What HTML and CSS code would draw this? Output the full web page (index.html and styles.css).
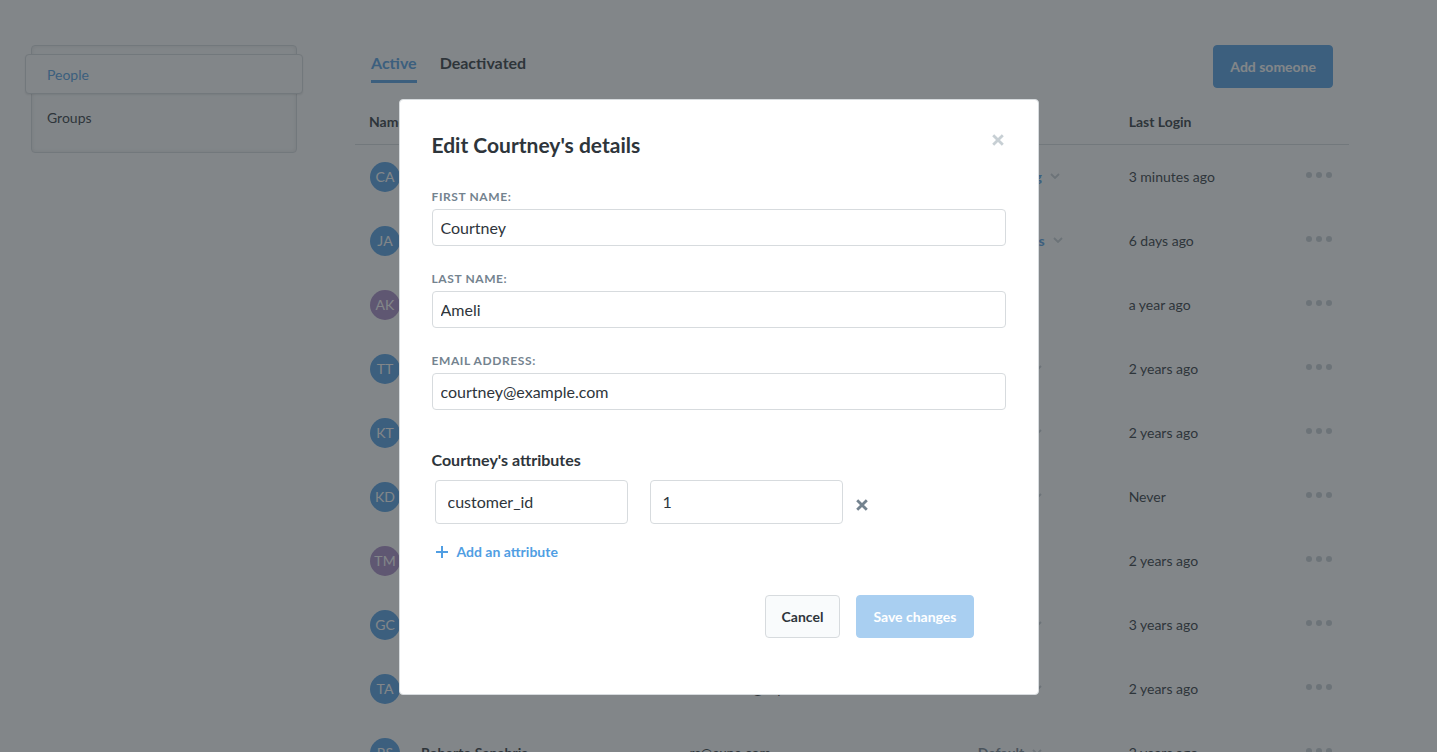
FILE: index.html
```html
<!DOCTYPE html>
<html lang="en">
<head>
<meta charset="utf-8">
<meta name="viewport" content="width=device-width, initial-scale=1">
<title>People</title>
<link rel="stylesheet" href="styles.css">
</head>
<body>
<svg class="sprite" aria-hidden="true">
  <symbol id="dots" viewBox="0 0 26 6"><circle cx="3" cy="3" r="3"/><circle cx="13" cy="3" r="3"/><circle cx="23" cy="3" r="3"/></symbol>
  <symbol id="chevron" viewBox="0 0 10 6"><path d="M1 1l4 4 4-4" fill="none" stroke="currentColor" stroke-width="1.8"/></symbol>
  <symbol id="close" viewBox="0 0 12 12"><path d="M1.200 1.200l9.600 9.600M10.800 1.200l-9.600 9.600" fill="none" stroke="currentColor" stroke-width="2.800"/></symbol>
  <symbol id="plus" viewBox="0 0 12 12"><path d="M6 0v12M0 6h12" fill="none" stroke="currentColor" stroke-width="2"/></symbol>
</svg>
<div class="page">
  <nav class="sidebar">
    <a class="sidebar-item selected" href="#people">People</a>
    <a class="sidebar-item" href="#groups">Groups</a>
  </nav>
  <main class="content">
    <header class="content-header">
      <nav class="tabs">
        <a class="tab active" href="#active">Active</a>
        <a class="tab" href="#deactivated">Deactivated</a>
      </nav>
      <button class="button add" type="button">Add someone</button>
    </header>
    <table class="people">
      <colgroup><col class="c-avatar"><col class="c-name"><col class="c-email"><col class="c-group"><col class="c-login"><col class="c-menu"></colgroup>
      <thead>
        <tr><th colspan="2">Name</th><th></th><th></th><th>Last Login</th><th></th></tr>
      </thead>
      <tbody>
        <tr><td><span class="avatar">CA</span></td><td></td><td></td><td><button class="group brand" type="button">Marketing <svg class="chevron"><use href="#chevron"/></svg></button></td><td>3 minutes ago</td><td><button class="menu" type="button" aria-label="More"><svg><use href="#dots"/></svg></button></td></tr>
        <tr><td><span class="avatar">JA</span></td><td></td><td></td><td><button class="group brand" type="button">Customers <svg class="chevron"><use href="#chevron"/></svg></button></td><td>6 days ago</td><td><button class="menu" type="button" aria-label="More"><svg><use href="#dots"/></svg></button></td></tr>
        <tr><td><span class="avatar admin">AK</span></td><td></td><td></td><td><button class="group purple" type="button">Admin <svg class="chevron"><use href="#chevron"/></svg></button></td><td>a year ago</td><td><button class="menu" type="button" aria-label="More"><svg><use href="#dots"/></svg></button></td></tr>
        <tr><td><span class="avatar">TT</span></td><td></td><td></td><td><button class="group" type="button">Default <svg class="chevron"><use href="#chevron"/></svg></button></td><td>2 years ago</td><td><button class="menu" type="button" aria-label="More"><svg><use href="#dots"/></svg></button></td></tr>
        <tr><td><span class="avatar">KT</span></td><td></td><td></td><td><button class="group" type="button">Default <svg class="chevron"><use href="#chevron"/></svg></button></td><td>2 years ago</td><td><button class="menu" type="button" aria-label="More"><svg><use href="#dots"/></svg></button></td></tr>
        <tr><td><span class="avatar">KD</span></td><td></td><td></td><td><button class="group" type="button">Default <svg class="chevron"><use href="#chevron"/></svg></button></td><td>Never</td><td><button class="menu" type="button" aria-label="More"><svg><use href="#dots"/></svg></button></td></tr>
        <tr><td><span class="avatar admin">TM</span></td><td></td><td></td><td><button class="group purple" type="button">Admin <svg class="chevron"><use href="#chevron"/></svg></button></td><td>2 years ago</td><td><button class="menu" type="button" aria-label="More"><svg><use href="#dots"/></svg></button></td></tr>
        <tr><td><span class="avatar">GC</span></td><td></td><td></td><td><button class="group" type="button">Default <svg class="chevron"><use href="#chevron"/></svg></button></td><td>3 years ago</td><td><button class="menu" type="button" aria-label="More"><svg><use href="#dots"/></svg></button></td></tr>
        <tr><td><span class="avatar">TA</span></td><td></td><td>tanderson@expe.com</td><td><button class="group" type="button">Default <svg class="chevron"><use href="#chevron"/></svg></button></td><td>2 years ago</td><td><button class="menu" type="button" aria-label="More"><svg><use href="#dots"/></svg></button></td></tr>
        <tr><td><span class="avatar">RS</span></td><td class="name">Roberto Sanabria</td><td>rs@expe.com</td><td><button class="group" type="button">Default <svg class="chevron"><use href="#chevron"/></svg></button></td><td>2 years ago</td><td><button class="menu" type="button" aria-label="More"><svg><use href="#dots"/></svg></button></td></tr>
      </tbody>
    </table>
  </main>
</div>
<div class="backdrop">
  <form class="modal" role="dialog" aria-modal="true" aria-labelledby="modal-title">
    <div class="modal-header">
      <h1 class="modal-title" id="modal-title">Edit Courtney's details</h1>
      <button class="icon-button close" type="button" aria-label="Close"><svg><use href="#close"/></svg></button>
    </div>
    <div class="fields">
      <div class="field"><label for="first">First name:</label><input id="first" type="text" value="Courtney"></div>
      <div class="field"><label for="last">Last name:</label><input id="last" type="text" value="Ameli"></div>
      <div class="field"><label for="email">Email address:</label><input id="email" type="email" value="courtney@example.com"></div>
    </div>
    <h2 class="section-title">Courtney's attributes</h2>
    <div class="attribute">
      <input type="text" aria-label="Attribute name" value="customer_id">
      <input type="text" aria-label="Attribute value" value="1">
      <button class="icon-button remove" type="button" aria-label="Remove attribute"><svg><use href="#close"/></svg></button>
    </div>
    <button class="add-attribute" type="button"><svg><use href="#plus"/></svg>Add an attribute</button>
    <div class="actions">
      <button class="button cancel" type="button">Cancel</button>
      <button class="button save" type="submit" disabled>Save changes</button>
    </div>
  </form>
</div>
</body>
</html>
```
FILE: styles.css
```css
:root {
  --brand: #509ee3;
  --purple: #a989c5;
  --dark: #2e353b;
  --medium: #74838f;
  --light: #c7cfd4;
  --border: #d7dbde;
}
* { box-sizing: border-box; }
html, body { height: 100%; }
body {
  margin: 0;
  overflow: hidden;
  background: #fff;
  color: var(--dark);
  font-family: Lato, "Open Sans", sans-serif;
  font-size: 14px;
  line-height: 20px;
}
button, input { font: inherit; color: inherit; }
button { background: none; border: 0; padding: 0; cursor: pointer; }
a { color: inherit; text-decoration: none; }
.sprite { position: absolute; width: 0; height: 0; }

.page {
  display: flex;
  align-items: flex-start;
  gap: 58px;
  padding: 45px 88px 0 31px;
}
.sidebar {
  flex: 0 0 266px;
  padding: 8px 0 14px;
  background: #fcfdfd;
  border: 1px solid var(--border);
  border-radius: 4px;
  box-shadow: inset 0 0 4px rgba(0, 0, 0, 0.1);
}
.sidebar-item {
  display: block;
  padding: 14px 15px 10px;
}
.sidebar-item.selected {
  margin: 0 -7px;
  padding: 10px 21px 8px;
  background: #fff;
  border: 1px solid var(--border);
  border-radius: 4px;
  box-shadow: 0 1px 2px rgba(0, 0, 0, 0.1);
  color: var(--brand);
}
.content { flex: 1; min-width: 0; }
.content-header {
  display: flex;
  justify-content: space-between;
  align-items: flex-start;
  padding: 0 16px;
}
.tabs { display: flex; gap: 23px; }
.tab {
  padding: 8px 0 7px;
  border-bottom: 3px solid transparent;
  font-size: 16px;
  font-weight: 700;
}
.tab.active { color: var(--brand); border-color: var(--brand); }
.button {
  height: 43px;
  padding: 0 16px;
  border: 1px solid var(--border);
  border-radius: 4px;
  font-weight: 700;
}
.button.add { background: var(--brand); border-color: var(--brand); color: #fff; }

.people {
  width: 100%;
  margin-top: 12px;
  table-layout: fixed;
  border-collapse: separate;
  border-spacing: 0;
}
.c-avatar { width: 66px; }
.c-menu { width: 60px; }
.c-name { width: 27%; }
.c-email { width: 29%; }
.c-group { width: 151px; }
th {
  height: 45px;
  padding: 0;
  border-bottom: 1px solid var(--border);
  text-align: left;
}
th:first-child { padding-left: 14px; }
td { height: 64px; padding: 0; vertical-align: middle; white-space: nowrap; }
td:first-child { padding-left: 15px; }
td:last-child { padding: 0 17px 8px 0; text-align: right; }
.name { font-weight: 700; }
.avatar {
  display: grid;
  place-items: center;
  width: 30px;
  height: 30px;
  border-radius: 50%;
  background: var(--brand);
  color: #fff;
}
.avatar.admin { background: var(--purple); }
.group {
  display: flex;
  align-items: center;
  gap: 8px;
  color: var(--medium);
  font-weight: 700;
}
.group.brand { color: var(--brand); }
.group.purple { color: var(--purple); }
.chevron { width: 10px; height: 6px; margin-bottom: 2px; color: var(--light); }
.menu svg { display: block; width: 26px; height: 6px; fill: var(--light); }

.backdrop {
  position: fixed;
  inset: 0;
  padding-top: 99px;
  background: rgba(46, 53, 59, 0.6);
}
.modal {
  width: 640px;
  max-width: 100%;
  margin: 0 auto;
  padding: 32px 32px 56px;
  background: #fff;
  border: 1px solid var(--border);
  border-radius: 4px;
}
.modal-header { display: flex; justify-content: space-between; align-items: flex-start; }
.modal-title { margin: 0; font-size: 21px; line-height: 26px; }
.icon-button svg { display: block; width: 12px; height: 12px; }
.close { padding: 2px; color: var(--light); }
.fields { display: grid; gap: 24px; margin-top: 30px; }
.field { display: grid; gap: 4px; }
.field label {
  color: var(--medium);
  font-size: 12px;
  font-weight: 700;
  line-height: 17px;
  letter-spacing: 0.05em;
  text-transform: uppercase;
}
input {
  width: 100%;
  height: 37px;
  padding: 0 8px;
  background: #fff;
  border: 1px solid var(--border);
  border-radius: 4px;
  font-size: 16px;
}
.section-title { margin: 40px 0 10px; font-size: 16px; line-height: 20px; }
.attribute { display: flex; align-items: center; padding-left: 3px; }
.attribute input { width: 193px; height: 44px; padding: 0 12px 2px; }
.attribute input + input { margin-left: 22px; }
.remove { margin: 6px 0 0 13px; color: var(--medium); }
.add-attribute {
  display: flex;
  align-items: center;
  gap: 9px;
  margin: 18px 0 0 4px;
  color: var(--brand);
  font-weight: 700;
}
.add-attribute svg { width: 12px; height: 12px; }
.actions { display: flex; justify-content: flex-end; gap: 16px; margin-top: 33px; padding-right: 32px; }
.cancel { background: #f9fbfc; }
.save { background: #a9cff1; border-color: #a9cff1; color: #fff; }
```
